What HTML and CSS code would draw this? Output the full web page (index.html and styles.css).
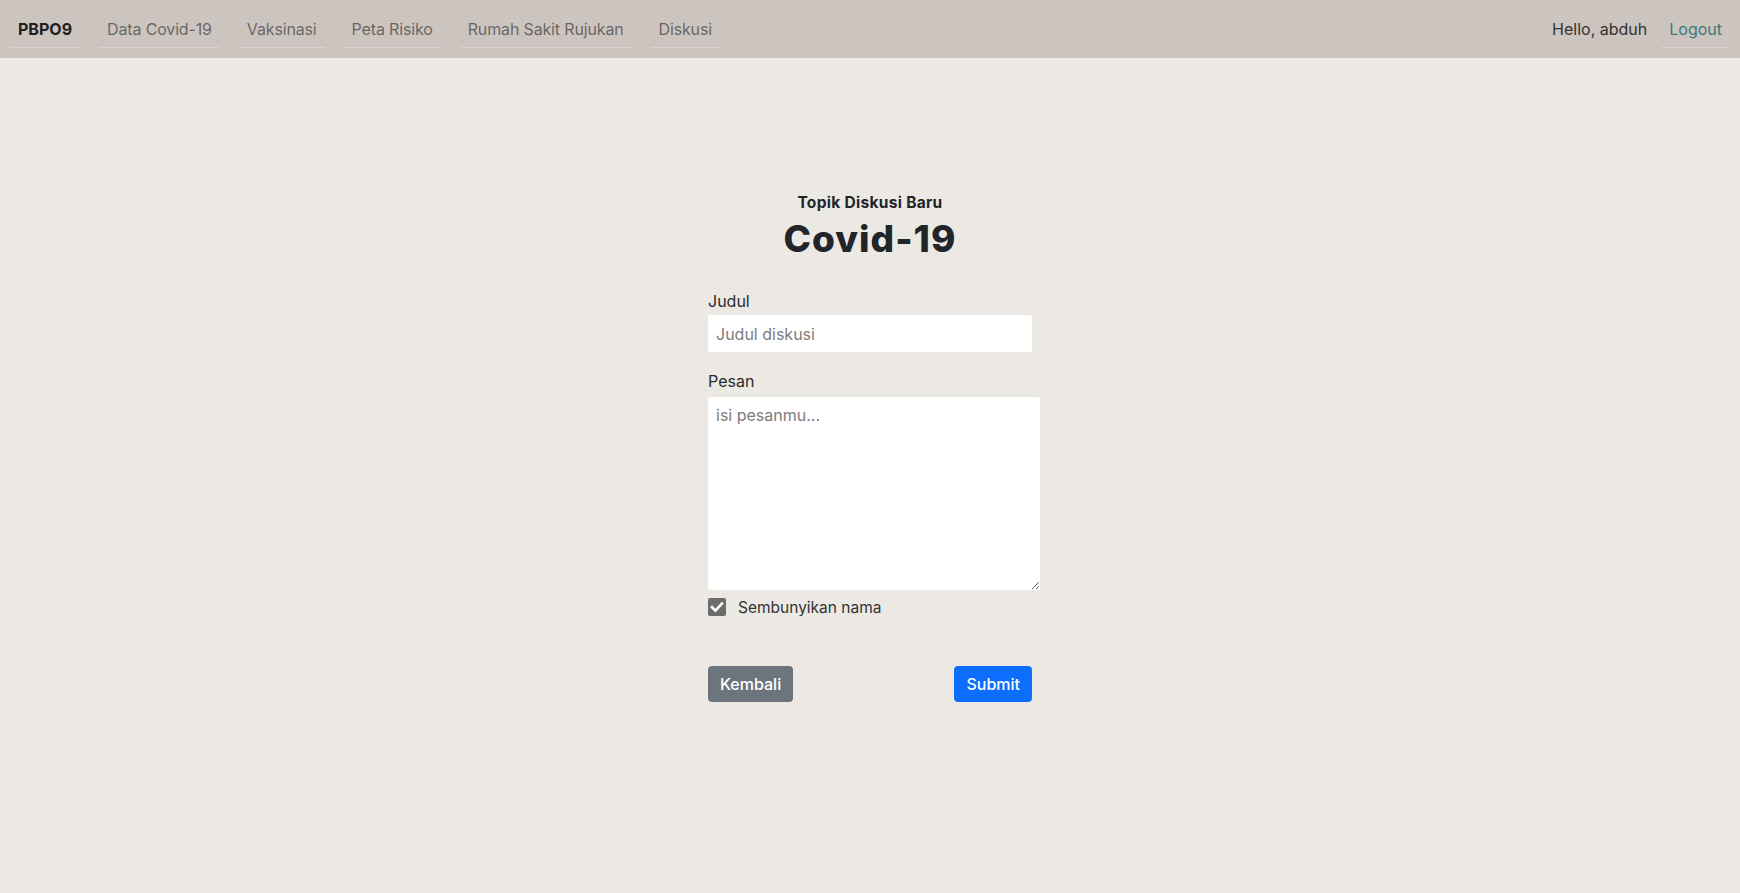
FILE: index.html
```html
<!DOCTYPE html>
<html lang="id">
<head>
<meta charset="utf-8">
<title>Topik Diskusi Baru</title>
<link rel="stylesheet" href="styles.css">
</head>
<body>
<nav class="navbar">
  <ul class="nav-left">
    <li><a class="nav-link brand" href="#">PBPO9</a></li>
    <li><a class="nav-link" href="#">Data Covid-19</a></li>
    <li><a class="nav-link" href="#">Vaksinasi</a></li>
    <li><a class="nav-link" href="#">Peta Risiko</a></li>
    <li><a class="nav-link" href="#">Rumah Sakit Rujukan</a></li>
    <li><a class="nav-link" href="#">Diskusi</a></li>
  </ul>
  <div class="nav-right">
    <span class="hello">Hello, abduh</span>
    <a class="nav-link logout" href="#">Logout</a>
  </div>
</nav>
<main class="main">
  <form class="form">
    <p class="subtitle">Topik Diskusi Baru</p>
    <h1 class="title">Covid-19</h1>
    <label class="label" for="judul">Judul</label>
    <input class="input" id="judul" type="text" placeholder="Judul diskusi">
    <label class="label label-pesan" for="pesan">Pesan</label>
    <textarea class="textarea" id="pesan" placeholder="isi pesanmu..."></textarea>
    <label class="check-row">
      <span class="checkbox"><svg viewBox="0 0 18 18" width="18" height="18"><path d="M4 9.2 L7.4 12.6 L14 5.6" fill="none" stroke="#fff" stroke-width="2.6" stroke-linecap="square"/></svg></span>
      <span class="check-text">Sembunyikan nama</span>
    </label>
    <div class="actions">
      <button type="button" class="btn btn-secondary">Kembali</button>
      <button type="submit" class="btn btn-primary">Submit</button>
    </div>
  </form>
</main>
</body>
</html>
```
FILE: styles.css
```css
* { box-sizing: border-box; }
html, body { margin: 0; padding: 0; }
body {
  background: #ece9e5;
  font-family: Inter, "Noto Sans", "Liberation Sans", sans-serif;
  color: #212529;
  font-size: 16px;
  min-height: 893px;
}
.navbar {
  height: 58px;
  background: #ccc4bf;
  display: flex;
  justify-content: space-between;
  align-items: flex-start;
  padding: 9px 10px 0 10px;
}
.nav-left {
  list-style: none;
  margin: 0;
  padding: 0;
  display: flex;
  gap: 19px;
}
.nav-link {
  display: block;
  padding: 8px 8px 6px;
  line-height: 24px;
  font-size: 16px;
  letter-spacing: -0.15px;
  color: rgba(0, 0, 0, 0.5);
  text-decoration: none;
  border-bottom: 1px solid #d8d1cd;
}
.brand {
  color: #1f1f1f;
  font-weight: 700;
  letter-spacing: 0;
}
.nav-right {
  display: flex;
  align-items: flex-start;
  gap: 14px;
}
.hello {
  padding: 8px 0 6px;
  line-height: 24px;
  color: #333;
}
.logout { color: #3b7a7d; letter-spacing: 0; }
.main {
  display: flex;
  justify-content: center;
  padding-top: 135px;
}
.form {
  width: 324px;
  display: flex;
  flex-direction: column;
}
.subtitle {
  margin: 0;
  text-align: center;
  font-size: 15.5px;
  line-height: 20px;
  font-weight: 700;
  letter-spacing: 0.3px;
}
.title {
  margin: 5px 0 0;
  text-align: center;
  font-size: 37px;
  line-height: 42px;
  font-weight: 800;
  letter-spacing: 1px;
}
.label {
  margin-top: 29px;
  margin-bottom: 2px;
  font-size: 16px;
  line-height: 24px;
  color: #2a2a2a;
}
.label-pesan { margin-top: 17px; margin-bottom: 4px; }
.input, .textarea {
  font-family: inherit;
  font-size: 16px;
  color: #212529;
  background: #fff;
  border: none;
  border-radius: 2px;
  outline: none;
}
.input {
  height: 37px;
  padding: 6px 8px;
}
.textarea {
  width: 332px;
  height: 193px;
  padding: 6px 8px;
  line-height: 24px;
  resize: vertical;
}
.input::placeholder, .textarea::placeholder { color: #7d7d7d; }
.check-row {
  margin-top: 5px;
  display: flex;
  align-items: center;
  height: 24px;
  gap: 12px;
  color: #333;
  font-size: 15.5px;
}
.checkbox {
  width: 18px;
  height: 18px;
  background: #6c6c6c;
  border-radius: 2px;
  display: flex;
}
.actions {
  margin-top: 47px;
  display: flex;
  justify-content: space-between;
}
.btn {
  font-family: inherit;
  font-size: 16px;
  font-weight: 500;
  line-height: 24px;
  padding: 6px 12px;
  border: none;
  border-radius: 4px;
  color: #fff;
  cursor: pointer;
}
.btn-secondary { background: #6c757d; }
.btn-primary { background: #0d6efd; }
```
